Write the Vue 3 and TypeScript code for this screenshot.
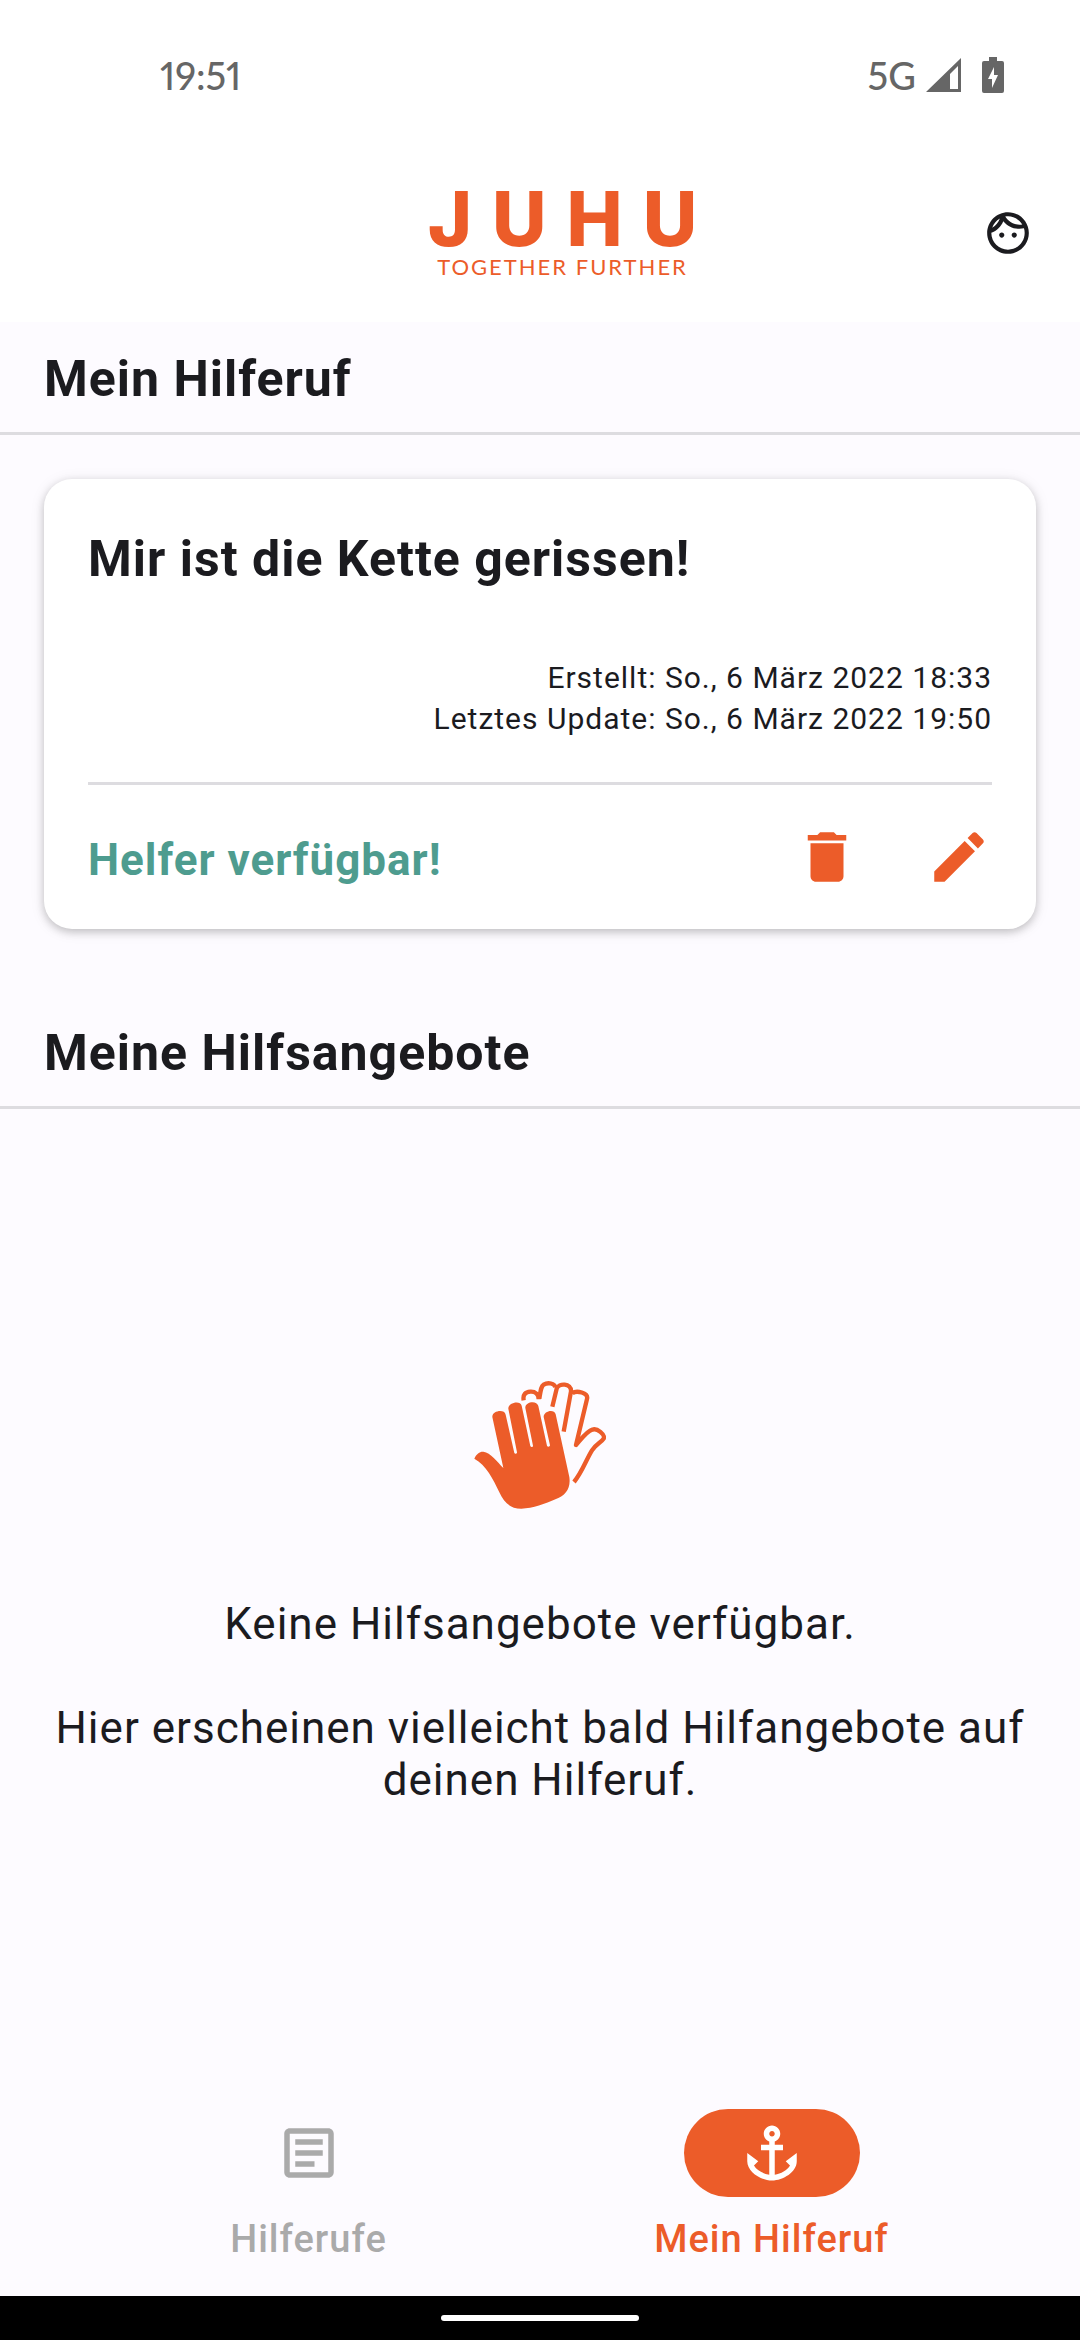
<script setup lang="ts">
interface HelpRequest {
  title: string
  created: string
  updated: string
  status: string
}

const request: HelpRequest = {
  title: 'Mir ist die Kette gerissen!',
  created: 'Erstellt: So., 6 März 2022 18:33',
  updated: 'Letztes Update: So., 6 März 2022 19:50',
  status: 'Helfer verfügbar!',
}
</script>

<template>
  <div class="screen">
    <div class="status-bar">
      <span class="status-text">19:51</span>
      <div class="status-icons">
        <span class="status-text">5G</span>
        <svg class="signal" viewBox="0 0 36 34" aria-hidden="true">
          <path fill-rule="evenodd" d="M0 34 35 0v34ZM24 16v15h8V8Z" />
        </svg>
        <svg class="battery" viewBox="0 0 22 36" aria-hidden="true">
          <path
            fill-rule="evenodd"
            d="M7 0h8v4h5q2 0 2 2v28q0 2-2 2H2q-2 0-2-2V6q0-2 2-2h5ZM12 10 6 22h4v9l6-13h-4Z"
          />
        </svg>
      </div>
    </div>

    <header class="app-bar">
      <div class="brand">
        <span class="brand-name">JUHU</span>
        <span class="brand-claim">TOGETHER FURTHER</span>
      </div>
      <button class="profile" type="button" aria-label="Profil">
        <svg viewBox="0 0 24 24" aria-hidden="true">
          <path
            d="M10.25 13c0 .69-.56 1.25-1.25 1.25S7.75 13.69 7.75 13s.56-1.25 1.25-1.25 1.25.56 1.25 1.25zM15 11.75c-.69 0-1.25.56-1.25 1.25s.56 1.25 1.25 1.25 1.25-.56 1.25-1.25-.56-1.25-1.25-1.25zm7 .25c0 5.52-4.48 10-10 10S2 17.52 2 12 6.48 2 12 2s10 4.48 10 10zM10.66 4.12C12.06 6.44 14.6 8 17.5 8c.46 0 .91-.05 1.34-.12C17.44 5.56 14.9 4 12 4c-.46 0-.91.05-1.34.12zM4.42 9.47c1.71-.97 3.03-2.55 3.66-4.44C6.37 6 5.05 7.58 4.42 9.47zM20 12c0-.78-.12-1.53-.33-2.24-.7.15-1.42.24-2.17.24-3.13 0-5.92-1.44-7.76-3.69C8.69 8.87 6.6 10.88 4 11.86c.01.04 0 .09 0 .14 0 4.42 3.58 8 8 8s8-3.58 8-8z"
          />
        </svg>
      </button>
    </header>

    <main class="content">
      <h1 class="section-title">Mein Hilferuf</h1>

      <article class="card">
        <h2 class="card-title">{{ request.title }}</h2>
        <div class="dates">
          <p>{{ request.created }}</p>
          <p>{{ request.updated }}</p>
        </div>
        <div class="card-footer">
          <strong class="card-status">{{ request.status }}</strong>
          <div class="card-actions">
            <button type="button" aria-label="Löschen">
              <svg viewBox="0 0 24 24" aria-hidden="true">
                <path d="M6 19c0 1.100.9 2 2 2h8c1.100 0 2-.9 2-2V7H6v12zM19 4h-3.500l-1-1h-5l-1 1H5v2h14V4z" />
              </svg>
            </button>
            <button type="button" aria-label="Bearbeiten">
              <svg viewBox="0 0 24 24" aria-hidden="true">
                <path
                  d="M3 17.250V21h3.750L17.810 9.940l-3.750-3.750L3 17.250zM20.710 7.040c.39-.39.39-1.020 0-1.410l-2.340-2.340c-.39-.39-1.020-.39-1.410 0l-1.830 1.830 3.750 3.750 1.830-1.830z"
                />
              </svg>
            </button>
          </div>
        </div>
      </article>

      <h1 class="section-title">Meine Hilfsangebote</h1>

      <section class="empty">
        <svg class="hands" viewBox="42 54 396 396" aria-hidden="true">
          <path
            class="hand-solid"
            d="M43 290C50 274 60 268 70 269C92 271 112 300 130 318L97 165C96 146 134 140 137 158L163 273C165 277 171 276 171 271L145 140C144 122 181 114 185 131L211 252C213 257 219 256 219 251L196 138C194 119 231 113 235 132L261 251C263 256 270 254 270 250L251 165C250 148 282 139 287 157L328 345C333 381 316 400 288 411C255 425 219 439 184 440C150 440 132 421 118 391C100 352 78 309 43 290Z"
          />
          <path
            class="hand-line"
            d="M191 115C188 98 196 90 211 89C226 88 236 97 236 112M238 110C242 85 243 73 251 68C264 60 284 64 286 76M277 134L290 80C295 62 335 63 333 88L311 209M337 94C349 84 386 92 381 111L348 249C364 231 381 207 397 203C411 197 436 218 431 230C425 240 407 247 396 265C379 292 366 331 342 360"
          />
        </svg>
        <div class="empty-text">
          <p>Keine Hilfsangebote verfügbar.</p>
          <p>Hier erscheinen vielleicht bald Hilfangebote auf deinen Hilferuf.</p>
        </div>
      </section>
    </main>

    <nav class="bottom-nav">
      <a class="nav-item" href="#hilferufe">
        <span class="nav-pill">
          <svg viewBox="0 0 24 24" aria-hidden="true">
            <path
              d="M19 5v14H5V5h14m0-2H5c-1.100 0-2 .9-2 2v14c0 1.100.9 2 2 2h14c1.100 0 2-.9 2-2V5c0-1.100-.9-2-2-2zM14 17H7v-2h7v2zm3-4H7v-2h10v2zm0-4H7V7h10v2z"
            />
          </svg>
        </span>
        <span>Hilferufe</span>
      </a>
      <a class="nav-item active" href="#mein-hilferuf" aria-current="page">
        <span class="nav-pill">
          <svg viewBox="0 0 24 24" aria-hidden="true">
            <path
              d="M17 15l1.550 1.550c-.96 1.690-3.330 3.040-5.550 3.370V11h3V9h-3V7.820C14.160 7.400 15 6.300 15 5c0-1.650-1.350-3-3-3S9 3.350 9 5c0 1.300.84 2.400 2 2.820V9H8v2h3v8.920c-2.220-.33-4.590-1.680-5.550-3.370L7 15l-4-3v3c0 3.880 4.920 7 9 7s9-3.120 9-7v-3l-4 3zM12 4c.55 0 1 .45 1 1s-.45 1-1 1-1-.45-1-1 .45-1 1-1z"
            />
          </svg>
        </span>
        <span>Mein Hilferuf</span>
      </a>
    </nav>

    <div class="gesture-bar"><span class="gesture-handle"></span></div>
  </div>
</template>

<style>
body {
  margin: 0;
  background: #fdfbff;
}
</style>

<style scoped>
.screen {
  --orange: #ec5c29;
  --line: #dddce0;
  display: flex;
  flex-direction: column;
  min-height: 100vh;
  color: #1b1b1f;
  background: #fdfbff;
  font-family: Roboto, sans-serif;
}

h1,
h2,
p {
  margin: 0;
}

svg {
  display: block;
  fill: currentColor;
}

button {
  padding: 0;
  border: 0;
  background: none;
  color: inherit;
  cursor: pointer;
}

.status-bar {
  display: flex;
  align-items: center;
  justify-content: space-between;
  height: 150px;
  padding: 0 76px 0 160px;
  background: #fff;
  color: #666;
}

.status-text {
  font-family: Lato, sans-serif;
  font-size: 38px;
  font-variant-numeric: proportional-nums;
  font-weight: 500;
  line-height: 48px;
}

.status-icons {
  display: flex;
  align-items: center;
  gap: 10px;
}

.signal {
  width: 36px;
  height: 34px;
}

.battery {
  width: 22px;
  height: 36px;
  margin-left: 10px;
}

.app-bar {
  display: grid;
  grid-template-columns: 1fr auto 1fr;
  align-items: center;
  height: 166px;
  padding: 0 47px 6px 92px;
  background: #fff;
}

.brand {
  display: flex;
  flex-direction: column;
  grid-column: 2;
  align-items: center;
  padding-top: 4px;
  color: var(--orange);
  font-family: Inter, sans-serif;
}

.brand-name {
  margin-right: -20px;
  font-size: 75px;
  font-weight: 800;
  line-height: 64px;
  letter-spacing: 20px;
}

.brand-claim {
  font-family: Lato, sans-serif;
  font-size: 22px;
  line-height: 32px;
  letter-spacing: 2px;
}

.profile {
  justify-self: end;
}

.profile svg {
  width: 50px;
  height: 50px;
}

.content {
  display: flex;
  flex: 1;
  flex-direction: column;
}

.section-title {
  padding: 27px 44px 23px;
  border-bottom: 3px solid var(--line);
  font-size: 50px;
  font-weight: 700;
  line-height: 60px;
  letter-spacing: 1px;
}

.card {
  display: flex;
  flex-direction: column;
  margin: 44px 44px 67px;
  padding: 44px 44px 39px;
  border-radius: 28px;
  background: #fff;
  box-shadow: 0 3px 8px rgb(0 0 0 / 20%), 0 2px 16px rgb(0 0 0 / 8%);
}

.card-title {
  font-size: 50px;
  font-weight: 700;
  line-height: 72px;
  letter-spacing: 1px;
}

.dates {
  padding: 62px 0 43px;
  font-size: 30px;
  line-height: 41px;
  letter-spacing: 1px;
  text-align: right;
}

.card-footer {
  display: flex;
  align-items: flex-end;
  justify-content: space-between;
  padding-top: 39px;
  border-top: 3px solid var(--line);
}

.card-status {
  color: #4e9c8f;
  font-size: 44px;
  line-height: 60px;
  letter-spacing: 1px;
}

.card-actions {
  display: flex;
  gap: 66px;
  color: var(--orange);
}

.card-actions svg,
.nav-pill svg {
  width: 66px;
  height: 66px;
}

.empty {
  display: flex;
  flex: 1;
  flex-direction: column;
  align-items: center;
  justify-content: center;
  gap: 86px;
  padding: 0 44px;
}

.hands {
  width: 132px;
  height: 132px;
  color: var(--orange);
}

.hand-line {
  fill: none;
  stroke: currentColor;
  stroke-width: 13;
  stroke-linejoin: round;
}

.empty-text {
  display: flex;
  flex-direction: column;
  gap: 52px;
  font-size: 44px;
  line-height: 52px;
  letter-spacing: 1px;
  text-align: center;
}

.bottom-nav {
  display: flex;
  padding: 33px 77px 31px;
}

.nav-item {
  display: flex;
  flex: 1;
  flex-direction: column;
  align-items: center;
  gap: 16px;
  color: #aaa;
  font-size: 38px;
  font-weight: 500;
  line-height: 52px;
  letter-spacing: 1px;
  text-decoration: none;
}

.nav-pill {
  display: flex;
  align-items: center;
  justify-content: center;
  width: 176px;
  height: 88px;
  border-radius: 44px;
}

.nav-item.active {
  color: var(--orange);
}

.active .nav-pill {
  background: var(--orange);
  color: #fff;
}

.gesture-bar {
  display: flex;
  align-items: center;
  justify-content: center;
  height: 44px;
  background: #000;
}

.gesture-handle {
  width: 198px;
  height: 6px;
  border-radius: 3px;
  background: #fff;
}
</style>
